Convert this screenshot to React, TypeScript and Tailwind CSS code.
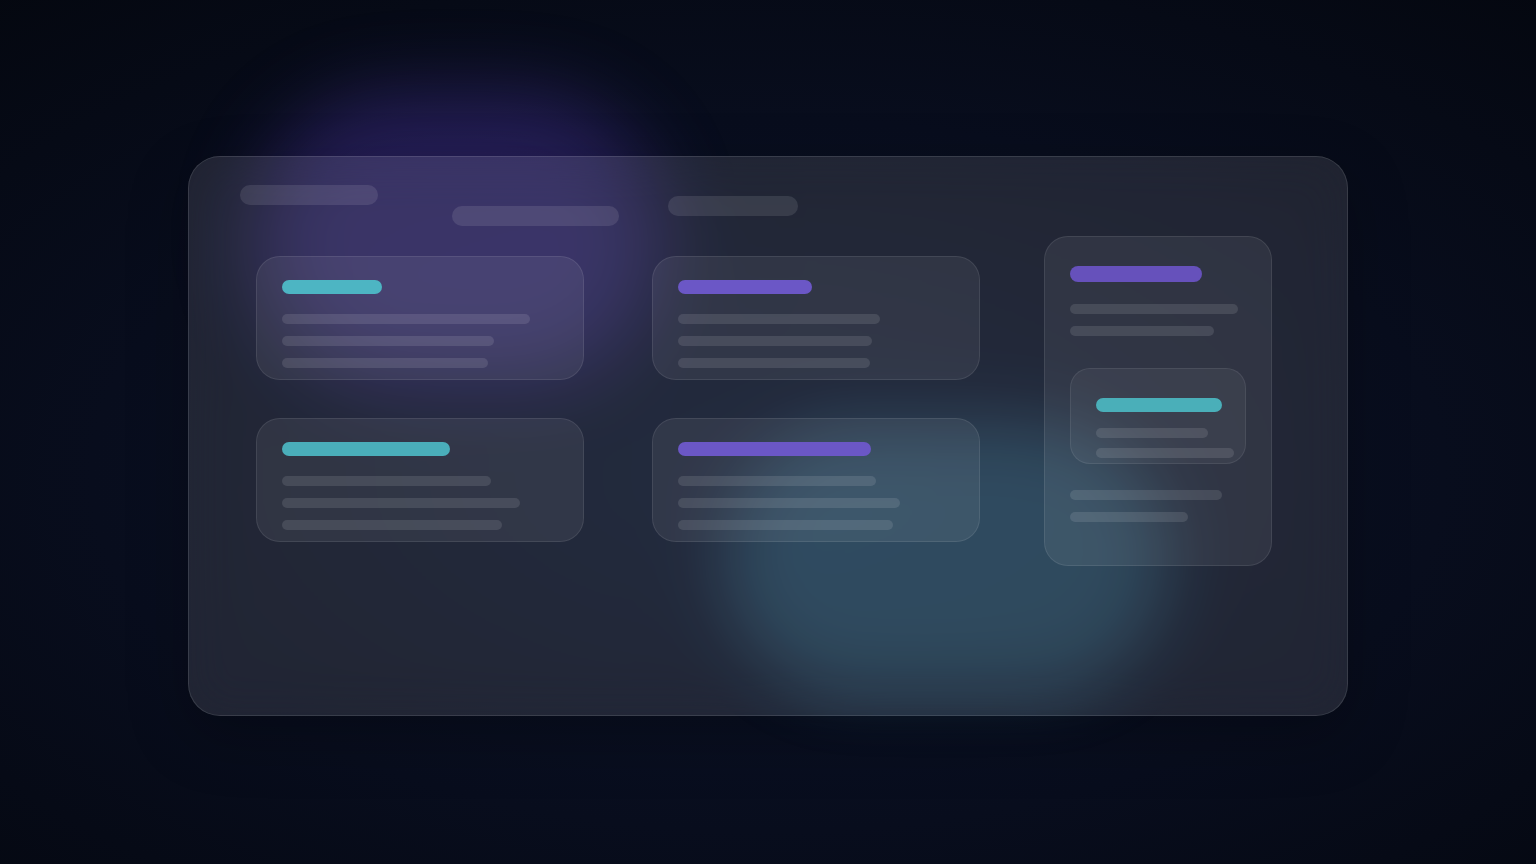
import React from "react";

type Bar = { w: number };

const leftCards: { accent: string; accentW: number; lines: number[] }[] = [
  { accent: "bg-[#4db5c3]", accentW: 100, lines: [248, 212, 206] },
  { accent: "bg-[#6b57c6]", accentW: 134, lines: [202, 194, 192] },
  { accent: "bg-[#4aaeba]", accentW: 168, lines: [209, 238, 220] },
  { accent: "bg-[#6b57c6]", accentW: 193, lines: [198, 222, 215] },
];

function Line({ w }: Bar) {
  return <div className="h-[10px] rounded-full bg-white/[0.11]" style={{ width: w }} />;
}

function Card({ accent, accentW, lines }: { accent: string; accentW: number; lines: number[] }) {
  return (
    <div className="box-border h-[124px] w-[328px] rounded-[24px] border border-white/[0.09] bg-white/[0.065] pl-[25px] pt-[23px]">
      <div className={`h-[14px] rounded-full ${accent}`} style={{ width: accentW }} />
      <div className="mt-[20px] flex flex-col gap-[12px]">
        {lines.map((w, i) => (
          <Line key={i} w={w} />
        ))}
      </div>
    </div>
  );
}

export default function App() {
  return (
    <div className="relative min-h-screen w-full overflow-hidden bg-[#060a16] bg-[radial-gradient(ellipse_80%_75%_at_50%_55%,#0b1329_0%,#080d1d_55%,#04070f_100%)]">
      {/* glow blobs */}
      <div className="pointer-events-none absolute left-[252px] top-[92px] h-[290px] w-[410px] rounded-full bg-[#5a3fc0]/[0.34] blur-[38px]" />
      <div className="pointer-events-none absolute left-[724px] top-[424px] h-[272px] w-[444px] rounded-full bg-[#3a90ab]/[0.30] blur-[28px]" />

      <div className="relative z-10 pl-[188px] pt-[156px]">
        <div className="box-border flex h-[560px] w-[1160px] items-start rounded-[32px] border border-white/[0.11] bg-white/[0.10] shadow-[0_20px_60px_rgba(0,0,0,0.25)] backdrop-blur-xl">
          {/* left section */}
          <div className="pl-[51px] pt-[28px]">
            <div className="flex items-start">
              <div className="h-[20px] w-[138px] rounded-full bg-white/[0.10]" />
              <div className="ml-[74px] mt-[21px] h-[20px] w-[167px] rounded-full bg-white/[0.10]" />
              <div className="ml-[49px] mt-[11px] h-[20px] w-[130px] rounded-full bg-white/[0.10]" />
            </div>
            <div className="ml-[16px] mt-[30px] grid grid-cols-[328px_328px] gap-x-[68px] gap-y-[38px]">
              {leftCards.map((c, i) => (
                <Card key={i} {...c} />
              ))}
            </div>
          </div>

          {/* right tall card */}
          <div className="ml-[64px] mt-[79px] box-border h-[330px] w-[228px] rounded-[24px] border border-white/[0.09] bg-white/[0.065] pl-[25px] pt-[29px]">
            <div className="h-[16px] w-[132px] rounded-full bg-[#6651bb]" />
            <div className="mt-[22px] flex flex-col gap-[12px]">
              <Line w={168} />
              <Line w={144} />
            </div>
            <div className="mt-[32px] box-border h-[96px] w-[176px] rounded-[20px] border border-white/[0.08] bg-white/[0.05] pl-[25px] pt-[29px]">
              <div className="h-[14px] w-[126px] rounded-full bg-[#4aafb9]" />
              <div className="mt-[16px] flex flex-col gap-[10px]">
                <Line w={112} />
                <Line w={138} />
              </div>
            </div>
            <div className="mt-[26px] flex flex-col gap-[12px]">
              <Line w={152} />
              <Line w={118} />
            </div>
          </div>
        </div>
      </div>
    </div>
  );
}
